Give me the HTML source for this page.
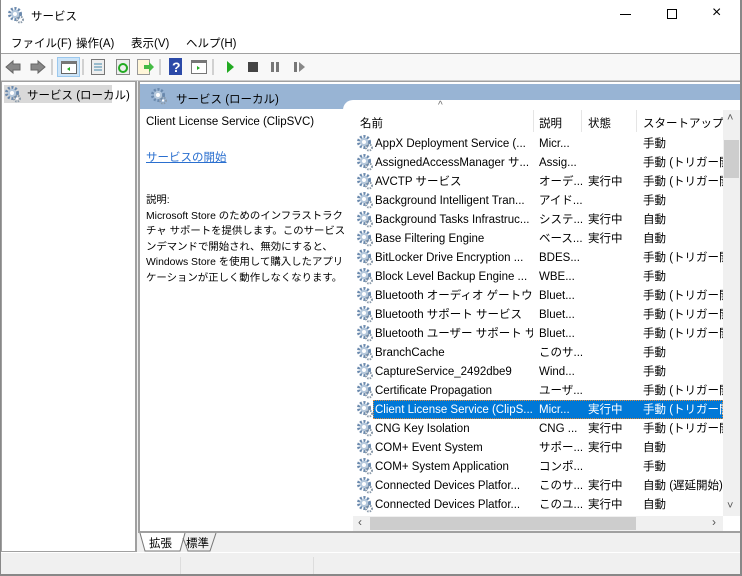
<!DOCTYPE html>
<html><head><meta charset="utf-8"><style>
*{margin:0;padding:0;box-sizing:border-box}
body{width:742px;height:576px;overflow:hidden;background:#f0f0f0;font-family:"Liberation Sans","Noto Sans CJK JP",sans-serif;font-size:11.5px;color:#000;position:relative}
.a{position:absolute;white-space:nowrap}
.row{position:absolute;left:355px;width:368px;height:19px;line-height:21px;overflow:hidden}
.row span{position:absolute;top:0;overflow:hidden;white-space:nowrap}
.row svg{position:absolute;left:2px;top:1px}
.c1{left:20px;width:158px}.c2{left:184px;width:46px}.c3{left:233px}.c4{left:288px;width:80px}
</style></head><body>
<svg width="0" height="0" style="position:absolute"><defs>
<g id="g">
<circle cx="7" cy="7" r="5.5" fill="none" stroke="#6a89ad" stroke-width="3" stroke-dasharray="2 1.6"/>
<circle cx="7" cy="7" r="4.2" fill="#b5c8dc"/><circle cx="7" cy="7" r="2" fill="#fff"/>
<circle cx="12" cy="12.5" r="3" fill="none" stroke="#8a9aaa" stroke-width="2" stroke-dasharray="1.4 1.1"/>
<circle cx="12" cy="12.5" r="1.2" fill="#fff"/>
</g></defs></svg>
<div class="a" style="left:0;top:0;width:742px;height:53px;background:#fff"></div>
<svg class="a" style="left:8px;top:7px" width="17" height="17"><use href="#g"/></svg>
<div class="a" style="left:31px;top:8px">サービス</div>
<div class="a" style="left:620px;top:14px;width:11px;height:1px;background:#000"></div>
<div class="a" style="left:667px;top:9px;width:10px;height:10px;border:1px solid #000"></div>
<div class="a" style="left:712px;top:4px;font-size:16px">×</div>
<div class="a" style="left:11px;top:35px">ファイル(F)</div>
<div class="a" style="left:76px;top:35px">操作(A)</div>
<div class="a" style="left:131px;top:35px">表示(V)</div>
<div class="a" style="left:186px;top:35px">ヘルプ(H)</div>
<div class="a" style="left:0;top:53px;width:742px;height:1px;background:#a0a0a0"></div>
<div class="a" style="left:0;top:54px;width:742px;height:26px;background:#f8f8f8"></div>
<svg class="a" style="left:0;top:54px" width="330" height="26">
<path d="M6 13 l7-6 v3 h7 v6 h-7 v3z" fill="#888" stroke="#666"/>
<path d="M45 13 l-7-6 v3 h-7 v6 h7 v3z" fill="#888" stroke="#666"/>
<line x1="52" y1="5" x2="52" y2="21" stroke="#aaa"/>
<rect x="57.5" y="3.5" width="22" height="19" fill="#cde4f7" stroke="#9bc8ee"/>
<rect x="61.5" y="7.5" width="15" height="12" fill="#fff" stroke="#666"/><rect x="61" y="7" width="16" height="3" fill="#777"/><path d="M70 13 l-3 2 3 2z" fill="#2a2"/>
<line x1="83" y1="5" x2="83" y2="21" stroke="#aaa"/>
<rect x="91.5" y="5.5" width="13" height="15" fill="#eee" stroke="#777"/><line x1="94" y1="10" x2="102" y2="10" stroke="#48a"/><line x1="94" y1="13" x2="102" y2="13" stroke="#48a"/><line x1="94" y1="16" x2="102" y2="16" stroke="#48a"/>
<rect x="116.5" y="5.5" width="13" height="15" fill="#eee" stroke="#888"/><circle cx="123" cy="14" r="4" fill="none" stroke="#2a2" stroke-width="2"/>
<rect x="137.5" y="5.5" width="12" height="15" fill="#fff6d8" stroke="#999"/><path d="M144 11 h5 v-3 l5 5 -5 5 v-3 h-5z" fill="#4b4"/>
<line x1="160" y1="5" x2="160" y2="21" stroke="#aaa"/>
<rect x="169" y="4" width="13" height="17" fill="#2c4aa8"/><text x="172" y="18" fill="#fff" font-size="14" font-weight="bold" font-family="Liberation Sans">?</text>
<rect x="191.5" y="6.5" width="15" height="13" fill="#fff" stroke="#777"/><rect x="191" y="6" width="16" height="3" fill="#777"/><path d="M197 12 l3 2 -3 2z" fill="#2a2"/>
<line x1="213" y1="5" x2="213" y2="21" stroke="#aaa"/>
<path d="M227 7 l7 6 -7 6z" fill="#2a2"/>
<rect x="248" y="8" width="10" height="10" fill="#444"/>
<rect x="271" y="8" width="3" height="10" fill="#777"/><rect x="276" y="8" width="3" height="10" fill="#777"/>
<rect x="294" y="8" width="3" height="10" fill="#777"/><path d="M299 8 l6 5 -6 5z" fill="#888"/>
</svg>
<div class="a" style="left:0;top:80px;width:742px;height:1px;background:#ccc"></div>
<div class="a" style="left:0;top:81px;width:137px;height:472px;background:#fff;border:2px solid #a0a0a0;border-top-width:1px"></div>
<div class="a" style="left:4px;top:85px;width:108px;height:18px;background:#d9d9d9"></div>
<svg class="a" style="left:5px;top:86px" width="17" height="17"><use href="#g"/></svg>
<div class="a" style="left:27px;top:87px">サービス (ローカル)</div>
<div class="a" style="left:138px;top:81px;width:604px;height:452px;background:#fff;border:2px solid #a0a0a0;border-top-width:1px;border-bottom-width:2px"></div>
<div class="a" style="left:140px;top:84px;width:600px;height:25px;background:#98b4d4"></div>
<div class="a" style="left:343px;top:100px;width:397px;height:12px;background:#fff;border-top-left-radius:10px"></div>
<svg class="a" style="left:151px;top:88px" width="17" height="17"><use href="#g"/></svg>
<div class="a" style="left:176px;top:91px">サービス (ローカル)</div>
<div class="a" style="left:146px;top:116px">Client License Service (ClipSVC)</div>
<div class="a" style="left:146px;top:149px;color:#2a6fcf;text-decoration:underline">サービスの開始</div>
<div class="a" style="left:146px;top:193px;line-height:15.5px;font-size:10.4px;width:200px;overflow:hidden">説明:<br>Microsoft Store のためのインフラストラク<br>チャ サポートを提供します。このサービスはオ<br>ンデマンドで開始され、無効にすると、<br>Windows Store を使用して購入したアプリ<br>ケーションが正しく動作しなくなります。</div>
<div class="a" style="left:438px;top:100px;font-size:10px;color:#666">^</div>
<div class="a" style="left:360px;top:115px">名前</div>
<div class="a" style="left:533px;top:110px;width:1px;height:22px;background:#e5e5e5"></div>
<div class="a" style="left:539px;top:115px">説明</div>
<div class="a" style="left:581px;top:110px;width:1px;height:22px;background:#e5e5e5"></div>
<div class="a" style="left:588px;top:115px">状態</div>
<div class="a" style="left:636px;top:110px;width:1px;height:22px;background:#e5e5e5"></div>
<div class="a" style="left:643px;top:115px;width:80px;overflow:hidden">スタートアップの種類</div>
<div class="a" style="left:723px;top:110px;width:17px;height:406px;background:#f0f0f0"></div>
<div class="a" style="left:727px;top:112px;font-size:11px;color:#555">˄</div>
<div class="a" style="left:724px;top:140px;width:15px;height:38px;background:#cdcdcd"></div>
<div class="a" style="left:727px;top:500px;font-size:11px;color:#555">˅</div>
<div class="a" style="left:353px;top:516px;width:370px;height:15px;background:#f0f0f0"></div>
<div class="a" style="left:370px;top:517px;width:266px;height:13px;background:#cdcdcd"></div>
<div class="a" style="left:358px;top:515px;font-size:12px;color:#555">‹</div>
<div class="a" style="left:712px;top:515px;font-size:12px;color:#555">›</div>
<div class="row" style="top:134px"><svg width="17" height="17"><use href="#g"/></svg><span class="c1">AppX Deployment Service (...</span><span class="c2">Micr...</span><span class="c4">手動</span></div>
<div class="row" style="top:153px"><svg width="17" height="17"><use href="#g"/></svg><span class="c1">AssignedAccessManager サ...</span><span class="c2">Assig...</span><span class="c4">手動 (トリガー開始)</span></div>
<div class="row" style="top:172px"><svg width="17" height="17"><use href="#g"/></svg><span class="c1">AVCTP サービス</span><span class="c2">オーデ...</span><span class="c3">実行中</span><span class="c4">手動 (トリガー開始)</span></div>
<div class="row" style="top:191px"><svg width="17" height="17"><use href="#g"/></svg><span class="c1">Background Intelligent Tran...</span><span class="c2">アイド...</span><span class="c4">手動</span></div>
<div class="row" style="top:210px"><svg width="17" height="17"><use href="#g"/></svg><span class="c1">Background Tasks Infrastruc...</span><span class="c2">システ...</span><span class="c3">実行中</span><span class="c4">自動</span></div>
<div class="row" style="top:229px"><svg width="17" height="17"><use href="#g"/></svg><span class="c1">Base Filtering Engine</span><span class="c2">ベース...</span><span class="c3">実行中</span><span class="c4">自動</span></div>
<div class="row" style="top:248px"><svg width="17" height="17"><use href="#g"/></svg><span class="c1">BitLocker Drive Encryption ...</span><span class="c2">BDES...</span><span class="c4">手動 (トリガー開始)</span></div>
<div class="row" style="top:267px"><svg width="17" height="17"><use href="#g"/></svg><span class="c1">Block Level Backup Engine ...</span><span class="c2">WBE...</span><span class="c4">手動</span></div>
<div class="row" style="top:286px"><svg width="17" height="17"><use href="#g"/></svg><span class="c1">Bluetooth オーディオ ゲートウェ...</span><span class="c2">Bluet...</span><span class="c4">手動 (トリガー開始)</span></div>
<div class="row" style="top:305px"><svg width="17" height="17"><use href="#g"/></svg><span class="c1">Bluetooth サポート サービス</span><span class="c2">Bluet...</span><span class="c4">手動 (トリガー開始)</span></div>
<div class="row" style="top:324px"><svg width="17" height="17"><use href="#g"/></svg><span class="c1">Bluetooth ユーザー サポート サ...</span><span class="c2">Bluet...</span><span class="c4">手動 (トリガー開始)</span></div>
<div class="row" style="top:343px"><svg width="17" height="17"><use href="#g"/></svg><span class="c1">BranchCache</span><span class="c2">このサ...</span><span class="c4">手動</span></div>
<div class="row" style="top:362px"><svg width="17" height="17"><use href="#g"/></svg><span class="c1">CaptureService_2492dbe9</span><span class="c2">Wind...</span><span class="c4">手動</span></div>
<div class="row" style="top:381px"><svg width="17" height="17"><use href="#g"/></svg><span class="c1">Certificate Propagation</span><span class="c2">ユーザ...</span><span class="c4">手動 (トリガー開始)</span></div>
<div class="row" style="top:400px"><div style="position:absolute;left:18px;top:0;width:350px;height:19px;background:#0078d7;border:1px dotted #e08a3a"></div><svg width="17" height="17"><use href="#g"/></svg><span class="c1" style="color:#fff">Client License Service (ClipS...</span><span class="c2" style="color:#fff">Micr...</span><span class="c3" style="color:#fff">実行中</span><span class="c4" style="color:#fff">手動 (トリガー開始)</span></div>
<div class="row" style="top:419px"><svg width="17" height="17"><use href="#g"/></svg><span class="c1">CNG Key Isolation</span><span class="c2">CNG ...</span><span class="c3">実行中</span><span class="c4">手動 (トリガー開始)</span></div>
<div class="row" style="top:438px"><svg width="17" height="17"><use href="#g"/></svg><span class="c1">COM+ Event System</span><span class="c2">サポー...</span><span class="c3">実行中</span><span class="c4">自動</span></div>
<div class="row" style="top:457px"><svg width="17" height="17"><use href="#g"/></svg><span class="c1">COM+ System Application</span><span class="c2">コンポ...</span><span class="c4">手動</span></div>
<div class="row" style="top:476px"><svg width="17" height="17"><use href="#g"/></svg><span class="c1">Connected Devices Platfor...</span><span class="c2">このサ...</span><span class="c3">実行中</span><span class="c4">自動 (遅延開始)</span></div>
<div class="row" style="top:495px"><svg width="17" height="17"><use href="#g"/></svg><span class="c1">Connected Devices Platfor...</span><span class="c2">このユ...</span><span class="c3">実行中</span><span class="c4">自動</span></div>
<svg class="a" style="left:138px;top:533px" width="120" height="20">
<path d="M2 0 L7 18 H42 L47 0" fill="#fff" stroke="#777"/>
<path d="M45 5 L50 18 H72 L78 0" fill="none" stroke="#777"/>
</svg>
<div class="a" style="left:149px;top:535px">拡張</div>
<div class="a" style="left:186px;top:535px">標準</div>
<div class="a" style="left:0;top:552px;width:742px;height:1px;background:#fff"></div>
<div class="a" style="left:0;top:574px;width:742px;height:2px;background:#888"></div>
<div class="a" style="left:180px;top:557px;width:1px;height:17px;background:#ddd"></div>
<div class="a" style="left:313px;top:557px;width:1px;height:17px;background:#ddd"></div>
<div class="a" style="left:740px;top:0;width:2px;height:576px;background:#888"></div>
<div class="a" style="left:0;top:0;width:1px;height:576px;background:#888"></div>
</body></html>
